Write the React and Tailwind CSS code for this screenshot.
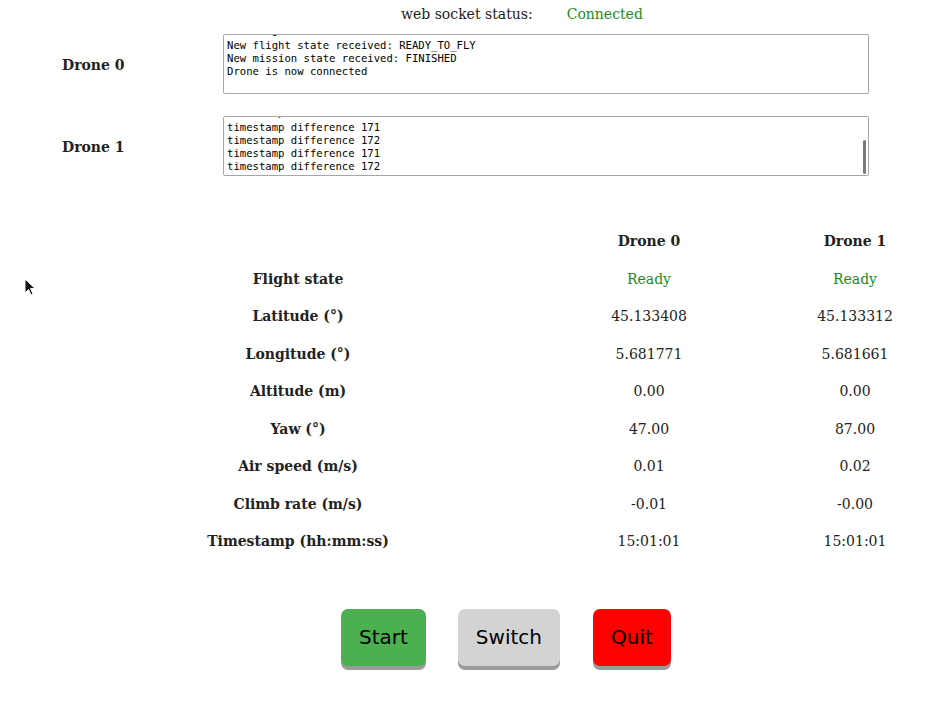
import React from "react";

const serif = { fontFamily: '"DejaVu Serif", serif' };

const rows = [
  ["Flight state", "Ready", "Ready", true],
  ["Latitude (°)", "45.133408", "45.133312"],
  ["Longitude (°)", "5.681771", "5.681661"],
  ["Altitude (m)", "0.00", "0.00"],
  ["Yaw (°)", "47.00", "87.00"],
  ["Air speed (m/s)", "0.01", "0.02"],
  ["Climb rate (m/s)", "-0.01", "-0.00"],
  ["Timestamp (hh:mm:ss)", "15:01:01", "15:01:01"],
];

function LogBox({ partial, lines, scrollbar }) {
  return (
    <div className="relative h-[60px] w-[646px] overflow-hidden rounded-[2px] border border-[#a6a6a6] bg-white">
      <div
        className="pl-[3px] text-[10.6px] leading-[13px] text-black whitespace-pre"
        style={{ fontFamily: '"DejaVu Sans Mono", monospace' }}
      >
        <div className="h-[4px] overflow-hidden">
          <div className="-mt-[11px]">{partial}</div>
        </div>
        {lines.map((l, i) => (
          <div key={i}>{l}</div>
        ))}
      </div>
      {scrollbar && (
        <div className="absolute right-[2px] top-[23px] h-[34px] w-[3px] rounded-full bg-[#7a7a7a]" />
      )}
    </div>
  );
}

function Btn({ children, cls }) {
  return (
    <button
      className={`h-[57px] rounded-[7px] px-[18px] text-[20px] text-black shadow-[0_4px_0_#9a9a9a] ${cls}`}
      style={{ fontFamily: '"DejaVu Sans", sans-serif' }}
    >
      {children}
    </button>
  );
}

export default function App() {
  return (
    <div className="relative min-h-[719px] w-[943px] bg-white text-[14px] text-[#222]" style={serif}>
      <div className="flex h-[28px] items-center pl-[401px]">
        <span>web socket status:</span>
        <span className="ml-[34px] text-[#1c8c1c]">Connected</span>
      </div>

      <div className="mt-[6px] flex items-center">
        <div className="w-[223px] pl-[62px] pt-[2px] font-bold">Drone 0</div>
        <LogBox
          partial="New flight state received: IDLE"
          lines={[
            "New flight state received: READY_TO_FLY",
            "New mission state received: FINISHED",
            "Drone is now connected",
          ]}
        />
      </div>

      <div className="mt-[22px] flex items-center">
        <div className="w-[223px] pl-[62px] pt-[2px] font-bold">Drone 1</div>
        <LogBox
          scrollbar
          partial="timestamp difference 172"
          lines={[
            "timestamp difference 171",
            "timestamp difference 172",
            "timestamp difference 171",
            "timestamp difference 172",
          ]}
        />
      </div>

      <div className="mt-[47px] grid grid-cols-[396px_306px_106px] pl-[100px] text-center">
        <div className="h-[37.5px]" />
        <div className="flex h-[37.5px] items-center justify-center font-bold">Drone 0</div>
        <div className="flex h-[37.5px] items-center justify-center font-bold">Drone 1</div>
        {rows.map(([label, a, b, green]) => (
          <React.Fragment key={label}>
            <div className="flex h-[37.5px] items-center justify-center font-bold">{label}</div>
            <div className={`flex h-[37.5px] items-center justify-center ${green ? "text-[#1c8c1c]" : ""}`}>{a}</div>
            <div className={`flex h-[37.5px] items-center justify-center ${green ? "text-[#1c8c1c]" : ""}`}>{b}</div>
          </React.Fragment>
        ))}
      </div>

      <div className="mt-[48px] flex pl-[341px]">
        <Btn cls="bg-[#4caf50]">Start</Btn>
        <Btn cls="ml-[32px] bg-[#d3d3d3]">Switch</Btn>
        <Btn cls="ml-[33px] bg-[#ff0000]">Quit</Btn>
      </div>

      <svg className="absolute left-[24px] top-[278px]" width="12" height="18" viewBox="0 0 12 18">
        <path d="M1 1 L1 15 L4.5 11.5 L7 17 L9 16 L6.5 10.5 L11 10.5 Z" fill="#111" stroke="#fff" strokeWidth="1" />
      </svg>
    </div>
  );
}
